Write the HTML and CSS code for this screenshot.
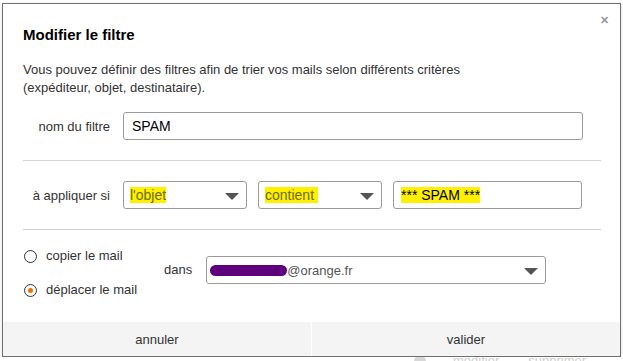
FILE: index.html
```html
<!DOCTYPE html>
<html lang="fr">
<head>
<meta charset="utf-8">
<title>Modifier le filtre</title>
<link rel="stylesheet" href="styles.css">
</head>
<body>
<div class="behind"><span class="bicon"></span><span>modifier</span><span>supprimer</span></div>
<div class="dialog">
  <div class="content">
    <span class="close">&#x2715;</span>
    <h1 class="title">Modifier le filtre</h1>
    <p class="intro">Vous pouvez définir des filtres afin de trier vos mails selon différents critères<br>(expéditeur, objet, destinataire).</p>
    <div class="row row-name">
      <label class="label">nom du filtre</label>
      <div class="field field-name"><span>SPAM</span></div>
    </div>
    <div class="sep"></div>
    <div class="row row-cond">
      <label class="label">à appliquer si</label>
      <div class="field select sel-1"><span class="hl">l'objet</span><span class="caret"></span></div>
      <div class="field select sel-2"><span class="hl">contient&nbsp;</span><span class="caret"></span></div>
      <div class="field field-value"><span class="hl">*** SPAM ***</span></div>
    </div>
    <div class="sep sep-2"></div>
    <div class="row-action">
      <div class="radios">
        <div class="radio"><span class="dot"></span>copier le mail</div>
        <div class="radio"><span class="dot on"></span>déplacer le mail</div>
      </div>
      <span class="dans">dans</span>
      <div class="field select sel-box"><span class="blob"></span><span>@orange.fr</span><span class="caret"></span></div>
    </div>
  </div>
  <div class="footer">
    <div class="btn">annuler</div>
    <div class="btn">valider</div>
  </div>
</div>
</body>
</html>
```

FILE: styles.css
```css
html, body {
  margin: 0;
  padding: 0;
  background: #ffffff;
  font-family: "Liberation Sans", Arial, sans-serif;
  font-size: 13px;
  color: #333333;
}

.behind {
  position: absolute;
  left: 414px;
  top: 353px;
  color: #d0d0d0;
  font-size: 13px;
  display: flex;
  align-items: center;
  gap: 29px;
}

.bicon {
  width: 12px;
  height: 12px;
  border-radius: 50%;
  background: #d8d8d8;
  margin-right: -2px;
}

.dialog {
  position: relative;
  margin: 3px 0 0 2px;
  width: 617px;
  height: 352px;
  border: 1px solid #707070;
  background: #ffffff;
  display: flex;
  flex-direction: column;
  box-shadow: 0 1px 3px rgba(0,0,0,0.15);
}

.content {
  position: relative;
  flex: 1;
  padding: 0 19px 0 20px;
}

.close {
  position: absolute;
  right: 11px;
  top: 10px;
  font-size: 11px;
  color: #999999;
  font-weight: bold;
}

.title {
  margin: 0;
  padding-top: 22px;
  font-size: 15px;
  line-height: 18px;
  font-weight: bold;
  color: #000000;
}

.intro {
  margin: 17px 0 0;
  line-height: 18px;
  color: #333333;
}

.row {
  display: flex;
  align-items: center;
}

.row-name {
  margin-top: 15px;
}

.label {
  width: 87px;
  text-align: right;
  margin-right: 13px;
  flex: none;
}

.field {
  box-sizing: border-box;
  height: 28px;
  border: 1px solid #9a9a9a;
  border-radius: 3px;
  display: flex;
  align-items: center;
  padding: 0 8px;
  color: #000000;
  background: #ffffff;
}

.field-name {
  width: 460px;
  font-size: 14px;
}

.sep {
  height: 1px;
  background: #d4d4d4;
  margin: 20px 0 20px;
}

.sep-2 {
  margin: 20px 0 16px;
}

.select {
  position: relative;
}

.sel-1 {
  width: 124px;
  padding-left: 6px;
}

.sel-2 {
  width: 124px;
  margin-left: 11px;
  padding-left: 6px;
}

.field-value {
  width: 189px;
  margin-left: 11px;
  padding-left: 7px;
}

.hl {
  background: #fff000;
  line-height: 16px;
  color: #5a5a00;
}

.field-value .hl {
  color: #000000;
  font-size: 14px;
}

.sel-1 .hl, .sel-2 .hl {
  font-size: 14px;
  color: #6b6b00;
}

.caret {
  position: absolute;
  right: 7px;
  top: 11px;
  width: 0;
  height: 0;
  border-left: 7px solid transparent;
  border-right: 7px solid transparent;
  border-top: 7px solid #555555;
}

.row-action {
  display: flex;
  align-items: flex-start;
}

.radios {
  display: flex;
  flex-direction: column;
  gap: 16px;
  padding-top: 1px;
}

.radio {
  display: flex;
  align-items: center;
  line-height: 18px;
}

.dot {
  box-sizing: border-box;
  width: 13px;
  height: 13px;
  border: 1px solid #333333;
  border-radius: 50%;
  margin: 0 9px 0 1px;
  display: flex;
  align-items: center;
  justify-content: center;
}

.dot.on::after {
  content: "";
  width: 5px;
  height: 5px;
  border-radius: 50%;
  background: #f16e00;
}

.dans {
  margin: 10px 14px 0 27px;
  line-height: 28px;
}

.sel-box {
  width: 340px;
  margin-top: 10px;
  padding-left: 3px;
  color: #555555;
}

.blob {
  display: inline-block;
  width: 77px;
  height: 11px;
  border-radius: 6px;
  background: #5e007e;
}

.footer {
  display: grid;
  grid-template-columns: 308px 1fr;
  height: 34px;
  margin-top: auto;
  background: #f4f4f4;
}

.btn {
  display: flex;
  align-items: center;
  justify-content: center;
  color: #333333;
}

.btn + .btn {
  border-left: 1px solid #ffffff;
}
```
